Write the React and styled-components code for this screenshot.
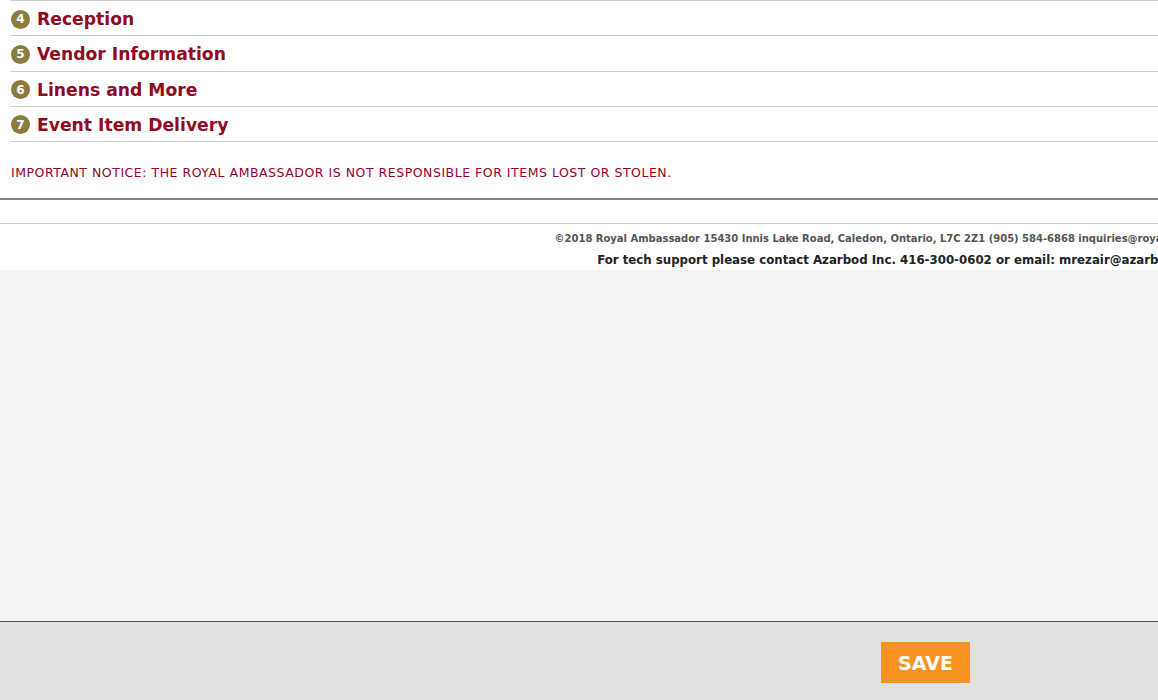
import React from 'react';
import styled, {createGlobalStyle} from 'styled-components';

const GlobalStyle = createGlobalStyle`
    html, body {
        margin: 0;
        padding: 0;
        overflow-x: hidden;
    }
    body {
        font-family: "DejaVu Sans", Verdana, sans-serif;
        background: #f4f4f4;
    }
`;

const Page = styled.div`
    display: flex;
    flex-direction: column;
    min-height: 700px;
    width: 1158px;
    overflow: hidden;
`;

const Main = styled.div`
    background: #fff;
    padding: 0 0 0 11px;
`;

const SectionRow = styled.div`
    display: flex;
    align-items: center;
    gap: 7px;
    height: 32.25px;
    padding-top: 2px;
    border-top: 1px solid #cccccc;
    &:last-of-type {
        border-bottom: 1px solid #cccccc;
    }
`;

const Badge = styled.span`
    display: inline-flex;
    align-items: center;
    justify-content: center;
    width: 19px;
    height: 19px;
    border-radius: 50%;
    background: #8b7b3c;
    color: #fff;
    font-size: 12px;
    font-weight: bold;
`;

const SectionTitle = styled.h3`
    margin: 0;
    font-size: 17.2px;
    font-weight: bold;
    color: #8f0a22;
`;

const Notice = styled.p`
    margin: 0;
    height: 56px;
    display: flex;
    align-items: center;
    padding-top: 5px;
    box-sizing: border-box;
    font-family: "DejaVu Sans", Tahoma, sans-serif;
    font-size: 12.5px;
    letter-spacing: 0.52px;
    color: #99002b;
`;

const Footer = styled.footer`
    background: #fff;
    border-top: 2px solid #808080;
`;

const Spacer = styled.div`
    height: 23px;
    border-bottom: 1px solid #cccccc;
`;

const FooterText = styled.div`
    width: 1804px;
    text-align: center;
    font-family: "DejaVu Sans Condensed", Tahoma, sans-serif;
    font-weight: bold;
    font-size: ${p => (p.$small ? '11.1px' : '13.1px')};
    color: ${p => (p.$small ? '#555' : '#222')};
    white-space: nowrap;
    line-height: ${p => (p.$small ? '17px' : '20px')};
    padding-top: ${p => (p.$small ? '6px' : '3px')};
`;

const Filler = styled.div`
    flex: 1;
    background: #f4f4f4;
`;

const ActionBar = styled.div`
    height: 79px;
    background: #e0e1e0;
    border-top: 1px solid #555;
    display: flex;
    align-items: flex-start;
    padding: 20px 0 0 881px;
    box-sizing: border-box;
`;

const SaveButton = styled.button`
    width: 89px;
    height: 41px;
    border: 0;
    background: #f7931e;
    color: #fff;
    font-family: "DejaVu Sans", Verdana, sans-serif;
    font-weight: bold;
    font-size: 19px;
    cursor: pointer;
    padding: 0;
`;

const sections = [
    {n: 4, title: 'Reception'},
    {n: 5, title: 'Vendor Information'},
    {n: 6, title: 'Linens and More'},
    {n: 7, title: 'Event Item Delivery'}
];

const App = () => (
    <Page>
        <GlobalStyle />
        <Main>
            {sections.map(s => (
                <SectionRow key={s.n}>
                    <Badge>{s.n}</Badge>
                    <SectionTitle>{s.title}</SectionTitle>
                </SectionRow>
            ))}
            <Notice>IMPORTANT NOTICE: THE ROYAL AMBASSADOR IS NOT RESPONSIBLE FOR ITEMS LOST OR STOLEN.</Notice>
        </Main>
        <Footer>
            <Spacer />
            <FooterText $small>
                ©2018 Royal Ambassador 15430 Innis Lake Road, Caledon, Ontario, L7C 2Z1 (905) 584-6868 inquiries@royalambassador.ca
            </FooterText>
            <FooterText>
                For tech support please contact Azarbod Inc. 416-300-0602 or email: mrezair@azarbod.com
            </FooterText>
        </Footer>
        <Filler />
        <ActionBar>
            <SaveButton>SAVE</SaveButton>
        </ActionBar>
    </Page>
);

export default App;
